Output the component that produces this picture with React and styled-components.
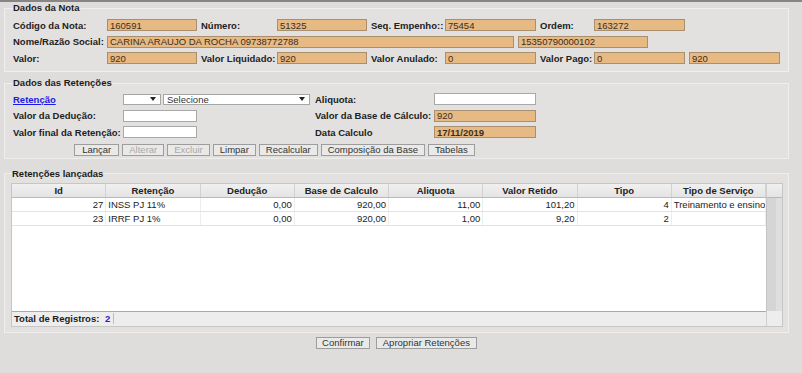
import React from 'react';
import styled, { createGlobalStyle } from 'styled-components';

const GlobalStyle = createGlobalStyle`
  html, body {
    margin: 0;
    padding: 0;
    background: #dfdddb;
  }
  body {
    font-family: "Liberation Sans", Arial, sans-serif;
    font-size: 9.5px;
    color: #222;
  }
`;

const Page = styled.div`
  box-sizing: border-box;
  width: 802px;
  min-height: 373px;
  border-top: 2px solid #868686;
  padding: 0 0 0 4px;
`;

const Panel = styled.fieldset`
  box-sizing: border-box;
  width: 785px;
  min-width: 0;
  margin: ${({ $mt }) => $mt || 0}px 0 0;
  padding: ${({ $pad }) => $pad};
  border: 1px solid #efeeec;
  background: #e3e1df;
`;

const Legend = styled.legend`
  padding: 0;
  margin-left: ${({ $ml }) => $ml || 0}px;
  font-weight: bold;
  font-size: 9.5px;
  line-height: 12px;
  color: #1c1c1c;
`;

const Row = styled.div`
  display: flex;
  align-items: center;
  gap: 4px;
  height: 12px;
  & + & {
    margin-top: 4.5px;
  }
`;

const Label = styled.span`
  flex: none;
  width: ${({ $w }) => ($w ? `${$w}px` : 'auto')};
  font-weight: bold;
  white-space: nowrap;
  color: #222;
`;

const LinkLabel = styled.a`
  font-weight: bold;
  color: #1a1ae6;
  text-decoration: underline;
  white-space: nowrap;
  cursor: pointer;
`;

const Field = styled.input`
  box-sizing: border-box;
  flex: none;
  width: ${({ $w }) => $w}px;
  height: 12px;
  margin: 0;
  padding: 0 2px;
  border: 1px solid ${({ $tan }) => ($tan ? '#a98f6e' : '#a8a8a8')};
  border-radius: 0;
  background: ${({ $tan }) => ($tan ? '#e7b983' : '#ffffff')};
  font-family: "Liberation Sans", Arial, sans-serif;
  font-size: 9.5px;
  font-weight: ${({ $bold }) => ($bold ? 'bold' : 'normal')};
  color: #3a2e22;
  outline: none;
`;

const FormGrid = styled.div`
  display: grid;
  width: 523px;
  grid-template-columns: 106px 188px 115px 102px;
  grid-auto-rows: 12px;
  column-gap: 4px;
  row-gap: 4.5px;
  align-items: center;
`;

const SelectPair = styled.div`
  display: flex;
  gap: 2px;
`;

const SelectBox = styled.div`
  box-sizing: border-box;
  width: ${({ $w }) => $w}px;
  height: 11px;
  display: flex;
  align-items: center;
  justify-content: space-between;
  padding: 0 4px 0 3px;
  border: 1px solid #a6a6a6;
  background: #fff;
  color: #333;
  font-size: 9.5px;
`;

const Arrow = styled.span`
  width: 0;
  height: 0;
  border-left: 3px solid transparent;
  border-right: 3px solid transparent;
  border-top: 4px solid #222;
`;

const ButtonBar = styled.div`
  grid-column: 1 / -1;
  display: flex;
  justify-content: center;
  gap: 3px;
  margin-top: 2px;
`;

const Button = styled.button`
  box-sizing: border-box;
  height: 12px;
  margin: 0;
  padding: 0 ${({ $px }) => $px || 6}px;
  border: 1px solid #9d9d9d;
  border-radius: 0;
  background: #e9e9e8;
  font-family: "Liberation Sans", Arial, sans-serif;
  font-size: 9.5px;
  line-height: 10px;
  color: #333;
  &:disabled {
    color: #a9a9a9;
  }
`;

const TableFrame = styled.div`
  display: grid;
  width: fit-content;
  grid-template-columns: 754px 16px;
  grid-template-rows: 14px 113px 15px;
  border: 1px solid #c6c6c6;
  background: #fff;
`;

const Head = styled.div`
  display: grid;
  grid-template-columns: repeat(8, 1fr);
  background: linear-gradient(#f0f0f0, #e4e4e4);
  border-bottom: 1px solid #b9b9b9;
`;

const HeadCell = styled.div`
  font-weight: bold;
  text-align: center;
  line-height: 13px;
  border-right: 1px solid #d2d2d2;
  color: #222;
`;

const ScrollCorner = styled.div`
  background: ${({ $foot }) => ($foot ? '#ededed' : 'linear-gradient(#f0f0f0, #e4e4e4)')};
  border-left: 1px solid #cfcfcf;
  border-bottom: ${({ $foot }) => ($foot ? 'none' : '1px solid #b9b9b9')};
`;

const Body = styled.div`
  background: #fff;
  overflow: hidden;
`;

const BodyRow = styled.div`
  display: grid;
  grid-template-columns: repeat(8, 1fr);
  height: 13px;
  border-bottom: 1px solid #e2e2e2;
`;

const Cell = styled.div`
  padding: 0 2px;
  line-height: 13px;
  text-align: ${({ $align }) => $align || 'left'};
  white-space: nowrap;
  overflow: hidden;
  border-right: 1px solid #ededed;
  color: #222;
`;

const ScrollTrack = styled.div`
  background: linear-gradient(90deg, #d5d5d5 0 60%, #dedede 60% 100%);
  border-left: 1px solid #c4c4c4;
`;

const Footer = styled.div`
  display: flex;
  align-items: center;
  padding-left: 2px;
  background: #ededed;
  border-top: 1px solid #a9a9a9;
  font-weight: bold;
  color: #1c1c1c;
`;

const Count = styled.span`
  color: #2424c6;
  padding: 0 3px;
  border-right: 1px solid #bcbcbc;
  line-height: 11px;
`;

const Actions = styled.div`
  width: 785px;
  display: flex;
  justify-content: center;
  gap: 6px;
  margin-top: 4px;
`;

const columns = ['Id', 'Retenção', 'Dedução', 'Base de Calculo', 'Aliquota', 'Valor Retido', 'Tipo', 'Tipo de Serviço'];

const rows = [
  { id: 27, ret: 'INSS PJ 11%', ded: '0,00', base: '920,00', aliq: '11,00', valor: '101,20', tipo: 4, servico: 'Treinamento e ensino' },
  { id: 23, ret: 'IRRF PJ 1%', ded: '0,00', base: '920,00', aliq: '1,00', valor: '9,20', tipo: 2, servico: '' },
];

export default function App() {
  return (
    <Page>
      <GlobalStyle />
      <Panel $pad="5px 8px 7px">
        <Legend>Dados da Nota</Legend>
        <Row>
          <Label $w={90}>Código da Nota:</Label>
          <Field $tan $w={90} readOnly value="160591" />
          <Label $w={72}>Número:</Label>
          <Field $tan $w={90} readOnly value="51325" />
          <Label $w={70}>Seq. Empenho::</Label>
          <Field $tan $w={91} readOnly value="75454" />
          <Label $w={50}>Ordem:</Label>
          <Field $tan $w={91} readOnly value="163272" />
        </Row>
        <Row>
          <Label $w={90}>Nome/Razão Social:</Label>
          <Field $tan $w={407} readOnly value="CARINA ARAUJO DA ROCHA 09738772788" />
          <Field $tan $w={130} readOnly value="15350790000102" />
        </Row>
        <Row>
          <Label $w={90}>Valor:</Label>
          <Field $tan $w={90} readOnly value="920" />
          <Label $w={72}>Valor Liquidado:</Label>
          <Field $tan $w={90} readOnly value="920" />
          <Label $w={70}>Valor Anulado:</Label>
          <Field $tan $w={91} readOnly value="0" />
          <Label $w={50}>Valor Pago:</Label>
          <Field $tan $w={91} readOnly value="0" />
          <Field $tan $w={91} readOnly value="920" />
        </Row>
      </Panel>

      <Panel $mt={5} $pad="4px 8px 3px">
        <Legend>Dados das Retenções</Legend>
        <FormGrid>
          <LinkLabel>Retenção</LinkLabel>
          <SelectPair>
            <SelectBox $w={38}>
              <span />
              <Arrow />
            </SelectBox>
            <SelectBox $w={147}>
              <span>Selecione</span>
              <Arrow />
            </SelectBox>
          </SelectPair>
          <Label>Aliquota:</Label>
          <Field $w={102} readOnly value="" />

          <Label>Valor da Dedução:</Label>
          <Field $w={74} readOnly value="" />
          <Label>Valor da Base de Cálculo:</Label>
          <Field $tan $w={102} readOnly value="920" />

          <Label>Valor final da Retenção:</Label>
          <Field $w={74} readOnly value="" />
          <Label>Data Calculo</Label>
          <Field $tan $bold $w={102} readOnly value="17/11/2019" />

          <ButtonBar>
            <Button $px={7}>Lançar</Button>
            <Button disabled>Alterar</Button>
            <Button disabled>Excluir</Button>
            <Button>Limpar</Button>
            <Button>Recalcular</Button>
            <Button>Composição da Base</Button>
            <Button>Tabelas</Button>
          </ButtonBar>
        </FormGrid>
      </Panel>

      <Panel $mt={9} $pad="3px 5px 5px 6px">
        <Legend $ml={1}>Retenções lançadas</Legend>
        <TableFrame>
          <Head>
            {columns.map((c) => (
              <HeadCell key={c}>{c}</HeadCell>
            ))}
          </Head>
          <ScrollCorner />
          <Body>
            {rows.map((r) => (
              <BodyRow key={r.id}>
                <Cell $align="right">{r.id}</Cell>
                <Cell>{r.ret}</Cell>
                <Cell $align="right">{r.ded}</Cell>
                <Cell $align="right">{r.base}</Cell>
                <Cell $align="right">{r.aliq}</Cell>
                <Cell $align="right">{r.valor}</Cell>
                <Cell $align="right">{r.tipo}</Cell>
                <Cell>{r.servico}</Cell>
              </BodyRow>
            ))}
          </Body>
          <ScrollTrack />
          <Footer>
            Total de Registros:&nbsp;<Count>2</Count>
          </Footer>
          <ScrollCorner $foot />
        </TableFrame>
      </Panel>

      <Actions>
        <Button $px={5}>Confirmar</Button>
        <Button>Apropriar Retenções</Button>
      </Actions>
    </Page>
  );
}
